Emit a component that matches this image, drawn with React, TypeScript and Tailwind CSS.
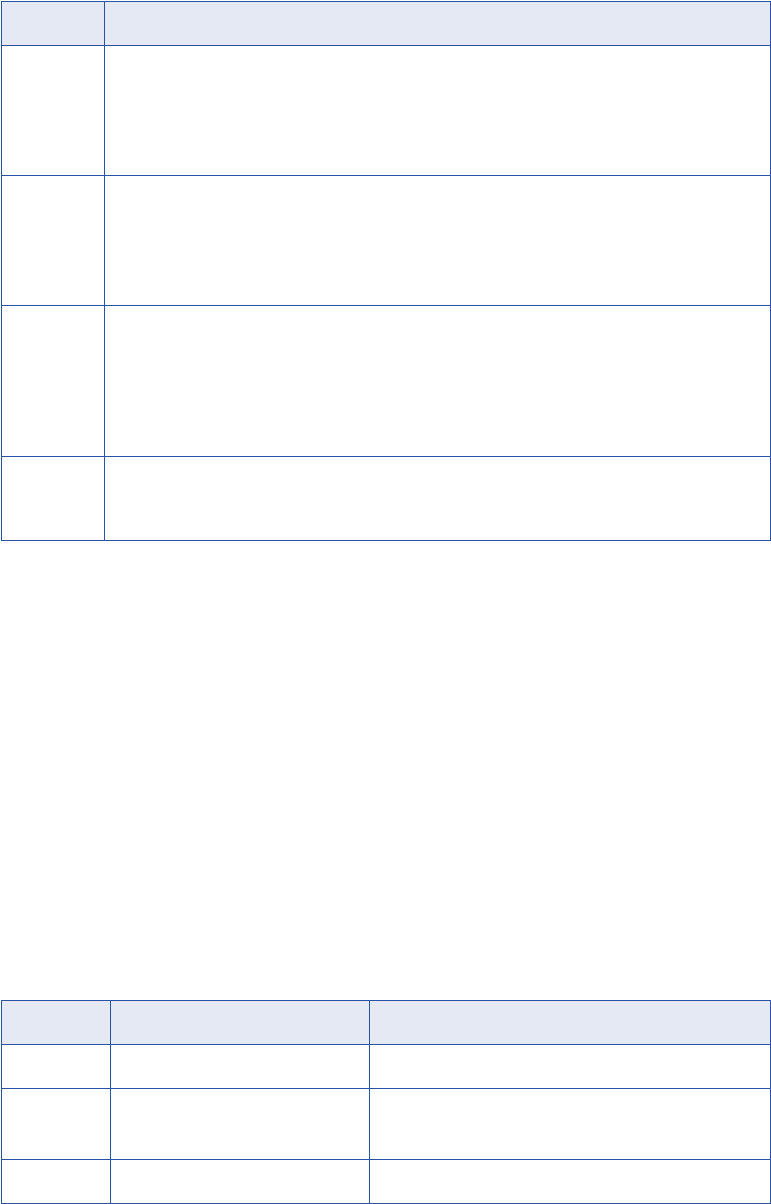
const TOP_ROWS = 4;
const BOTTOM_ROWS = 3;

function HeadCell() {
  return <div className="bg-[#e4e9f4]" />;
}

function BodyCell() {
  return <div className="bg-white" />;
}

export default function App() {
  return (
    <div className="min-h-screen bg-white pt-px pl-px font-['Liberation_Sans',sans-serif]">
      {/* upper table: two columns */}
      <div className="grid w-[770px] grid-cols-[102px_665px] grid-rows-[43px_129px_129px_150px_83px] gap-px bg-[#2a53a6] p-px">
        <HeadCell />
        <HeadCell />
        {Array.from({ length: TOP_ROWS }).map((_, i) => (
          <div key={i} className="contents">
            <BodyCell />
            <BodyCell />
          </div>
        ))}
      </div>

      {/* lower table: three columns */}
      <div className="mt-[459px] grid w-[770px] grid-cols-[108px_258px_400px] grid-rows-[43px_43px_70px_43px] gap-px bg-[#2a53a6] p-px">
        <HeadCell />
        <HeadCell />
        <HeadCell />
        {Array.from({ length: BOTTOM_ROWS }).map((_, i) => (
          <div key={i} className="contents">
            <BodyCell />
            <BodyCell />
            <BodyCell />
          </div>
        ))}
      </div>
    </div>
  );
}
